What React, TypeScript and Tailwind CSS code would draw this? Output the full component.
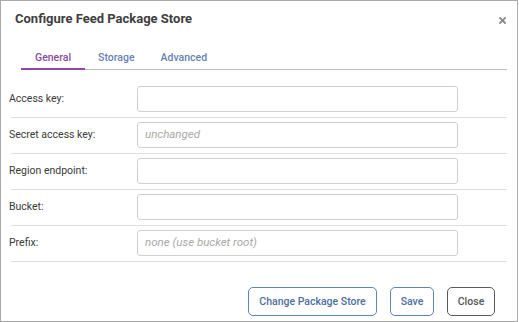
import React from "react";

const rows: { label: string; placeholder?: string }[] = [
  { label: "Access key:" },
  { label: "Secret access key:", placeholder: "unchanged" },
  { label: "Region endpoint:" },
  { label: "Bucket:" },
  { label: "Prefix:", placeholder: "none (use bucket root)" },
];

export default function App() {
  return (
    <div
      className="w-[519px] h-[322px] bg-white"
      style={{ fontFamily: "Roboto, 'Liberation Sans', sans-serif" }}
    >
      <div className="w-[518px] h-[322px] border border-[#a9a9a9] flex flex-col bg-white">
        <div className="flex items-start justify-between h-[36px] pl-[14px] pr-[10px] pt-[9px]">
          <div className="text-[13px] font-bold text-[#3e3e3e] leading-[18px]">
            Configure Feed Package Store
          </div>
          <svg width="7" height="7" viewBox="0 0 7 7" className="mt-[7px] mr-[1px]">
            <path d="M1 1 L6 6 M6 1 L1 6" stroke="#8a8a8a" strokeWidth="1.8" strokeLinecap="square" />
          </svg>
        </div>
        <div className="ml-[20px] mr-[10px] mt-[9px] flex border-b border-[#bcbcbc] h-[24px]">
          <div className="px-[14px] pt-[1px] text-[10.5px] font-medium text-[#8a4b9c] border-b-2 border-[#8e4aa0] leading-[22px] -mb-px">
            General
          </div>
          <div className="px-[13px] pt-[1px] text-[10.5px] font-medium text-[#6683b3] leading-[22px]">Storage</div>
          <div className="px-[13px] pt-[1px] text-[10.5px] font-medium text-[#6683b3] leading-[22px]">Advanced</div>
        </div>
        <div className="ml-[10px] mr-[10px] mt-[12px] flex flex-col">
          {rows.map((r) => (
            <div key={r.label} className="flex items-center pt-[4px] pb-[5px] border-b border-[#dedede]">
              <div className="w-[126px] -ml-[2px] text-[10.5px] text-[#3a3a3a] shrink-0">{r.label}</div>
              <div className="w-[321px] h-[26px] border border-[#cfcfcf] rounded-[3px] flex items-center px-[7px] ml-[2px]">
                {r.placeholder && (
                  <span className="text-[11.5px] italic text-[#a8a8a8]">{r.placeholder}</span>
                )}
              </div>
            </div>
          ))}
        </div>
        <div className="flex justify-end gap-[13px] mt-[25px] pr-[22px]">
          <button className="h-[29px] w-[129px] border border-[#5f86b6] rounded-[5px] text-[10.5px] font-medium text-[#4d6f9f]">
            Change Package Store
          </button>
          <button className="h-[29px] w-[44px] border border-[#5f86b6] rounded-[5px] text-[10.5px] font-medium text-[#4d6f9f]">
            Save
          </button>
          <button className="h-[29px] w-[48px] border border-[#5a5a5a] rounded-[5px] text-[10.5px] font-medium text-[#555]">
            Close
          </button>
        </div>
      </div>
    </div>
  );
}
